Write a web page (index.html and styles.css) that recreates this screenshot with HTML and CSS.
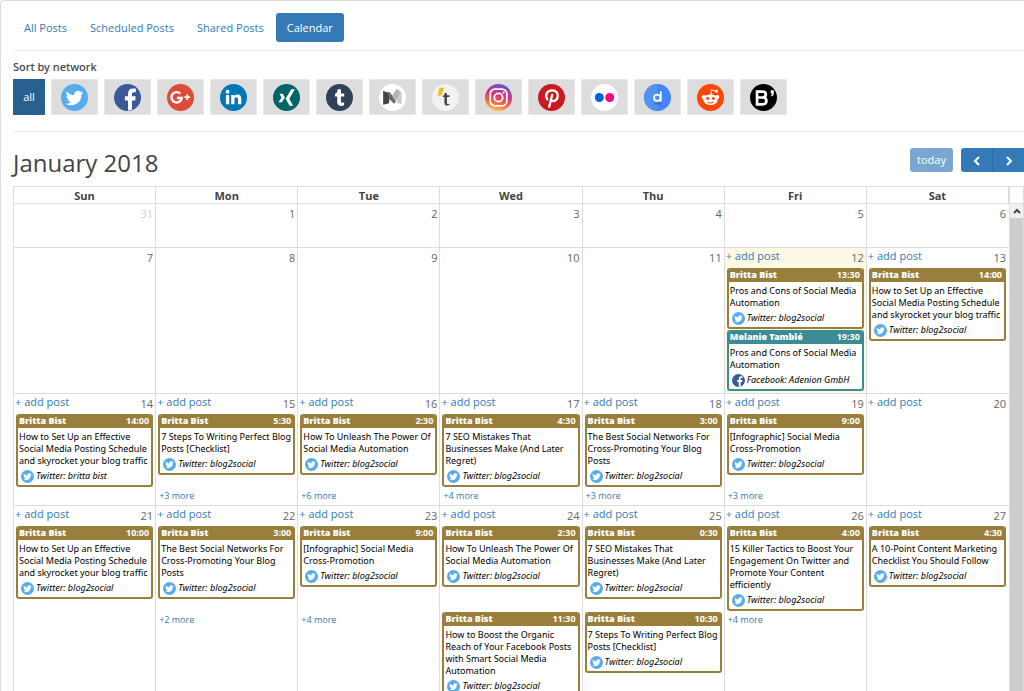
FILE: index.html
```
<!DOCTYPE html>
<html lang="en">
<head>
<meta charset="utf-8">
<title>Calendar</title>
<link rel="stylesheet" href="styles.css">
</head>
<body>
<svg class="sprite" aria-hidden="true">
  <symbol id="bird" viewBox="0 0 26 26"><circle cx="13" cy="13" r="13" fill="#55acee"/><path fill="#fff" d="M21.500 8.200c-.6.3-1.300.5-2 .6.700-.4 1.300-1.100 1.500-1.900-.7.4-1.400.7-2.200.8a3.500 3.500 0 0 0-6 3.200C10 10.700 7.400 9.300 5.700 7.200c-1 1.600-.5 3.600 1 4.700-.5 0-1.100-.2-1.500-.4 0 1.700 1.200 3.100 2.800 3.400-.5.1-1 .2-1.600.1.4 1.400 1.700 2.400 3.200 2.400A7 7 0 0 1 4.500 18.900a9.900 9.900 0 0 0 15.200-8.800c.7-.5 1.300-1.200 1.800-1.900z"/></symbol>
  <symbol id="fb" viewBox="0 0 26 26"><circle cx="13" cy="13" r="13" fill="#3b5998"/><path fill="#fff" d="M13.500 25.500v-9.700h-3v-4h3V9.300c0-3.200 1.900-4.900 4.700-4.900 1.300 0 2.500.1 2.800.1v3.400h-1.900c-1.500 0-1.800.7-1.800 1.800v2.100h3.600l-.5 4h-3.100v9.100c-1.200.5-2.500.6-3.800.6z"/></symbol>
</svg>
<div class="panel">
  <nav class="tabs">
    <a href="#">All Posts</a>
    <a href="#">Scheduled Posts</a>
    <a href="#">Shared Posts</a>
    <a href="#" class="active">Calendar</a>
  </nav>
  <section class="filter">
    <h2>Sort by network</h2>
    <div class="networks">
      <button class="all">all</button>
      <button aria-label="Twitter"><svg class="logo"><use href="#bird"/></svg></button>
      <button aria-label="Facebook"><svg class="logo"><use href="#fb"/></svg></button>
      <button aria-label="Google+"><svg class="logo" viewBox="0 0 26 26"><circle cx="13" cy="13" r="13" fill="#dd4b39"/><path d="M12.800 9.300a5 5 0 1 0 1.400 4.200H9.500" fill="none" stroke="#fff" stroke-width="2.300"/><path d="M19.500 10v5.400M16.800 12.700h5.400" stroke="#fff" stroke-width="1.700"/></svg></button>
      <button aria-label="LinkedIn"><svg class="logo" viewBox="0 0 26 26"><circle cx="13" cy="13" r="13" fill="#0077b5"/><circle cx="7.300" cy="7.500" r="1.900" fill="#fff"/><path fill="#fff" d="M5.700 10.500h3.200v9H5.700zM10.800 10.500h3v1.300c.6-1 1.700-1.600 3-1.600 2.900 0 3.700 1.900 3.700 4.500v4.800h-3.200v-4.300c0-1.400-.2-2.400-1.600-2.400s-1.800 1-1.800 2.400v4.300h-3.100z"/></svg></button>
      <button aria-label="Xing"><svg class="logo" viewBox="0 0 26 26"><circle cx="13" cy="13" r="13" fill="#026466"/><path d="M6.200 9.300h3.200l2.100 3.700-3 4.500H5.300l3-4.500zM17.600 5h3.500l-5.400 9.300 3.700 6.700h-3.500l-3.700-6.700z" fill="#fff"/></svg></button>
      <button aria-label="Tumblr"><svg class="logo" viewBox="0 0 26 26"><circle cx="13" cy="13" r="13" fill="#32415a"/><path fill="#fff" d="M11.200 5h3.200v4.200h3.100v2.900h-3.100v4.400c0 1.800 1.400 1.900 3 1.100v2.800c-3 1.400-6.600.8-6.600-3v-5.300H8.700V9.500c1.600-.5 2.400-1.900 2.500-4.500z"/></svg></button>
      <button aria-label="Medium"><svg class="logo" viewBox="0 0 26 26"><circle cx="13" cy="13" r="13" fill="#fff"/><path d="M4 6.500l5.800 2.500v9.500L4 20z" fill="#444"/><path d="M8 7.500l2.500.5 6 8.500-2 2.500-4.700-4.500z" fill="#6a6a6a"/><path d="M12.700 11l4.300-6.500L21.500 8l-5.700 8.500z" fill="#b4b4b4"/><path d="M21.700 8v11.500l-4.200-1.700v-4z" fill="#c8c8c8"/></svg></button>
      <button aria-label="Torial"><svg class="logo" viewBox="0 0 26 26"><circle cx="13" cy="13" r="13" fill="#f2f2f2"/><path d="M7.200 3.500h4.500L8.800 11H5.500z" fill="#fbb615"/><path fill="#444" d="M12.300 8.600h2.100v2.300h2.500v1.500h-2.500v5.700c0 1.500 1 1.700 2.500 1v1c-2.400 1.300-4.900.7-4.900-1.800v-5.900h-1.600v-1.100c1.200-.4 1.700-1.200 1.900-2.700z"/></svg></button>
      <button aria-label="Instagram"><svg class="logo" viewBox="0 0 26 26"><defs><linearGradient id="ig" x1=".3" y1="1" x2=".6" y2="0"><stop offset="0" stop-color="#ffc65a"/><stop offset=".3" stop-color="#fb6a3c"/><stop offset=".6" stop-color="#d6308a"/><stop offset="1" stop-color="#6b50cc"/></linearGradient></defs><circle cx="13" cy="13" r="13" fill="url(#ig)"/><g fill="none" stroke="#fff" stroke-width="1.700"><rect x="5" y="5" width="16" height="16" rx="4.500"/><circle cx="13" cy="13" r="4"/></g><circle cx="17.800" cy="8.300" r="1.100" fill="#fff"/></svg></button>
      <button aria-label="Pinterest"><svg class="logo" viewBox="0 0 26 26"><circle cx="13" cy="13" r="13" fill="#cb1a1f"/><path d="M9 14.800c-2.800-3.700-.5-8.600 4.600-8.600 4.300 0 6 3 5.300 6.300-.8 3.900-5.400 5.300-6.500 2.400M13.600 10.500L10.800 22" fill="none" stroke="#fff" stroke-width="2.200" stroke-linecap="round"/></svg></button>
      <button aria-label="Flickr"><svg class="logo" viewBox="0 0 26 26"><circle cx="13" cy="13" r="13" fill="#fff"/><circle cx="8" cy="13" r="4.300" fill="#0063dc"/><circle cx="18" cy="13" r="4.300" fill="#ff0084"/></svg></button>
      <button aria-label="Diigo"><svg class="logo" viewBox="0 0 26 26"><circle cx="13" cy="13" r="13" fill="#4285f4"/><path d="M13 0a13 13 0 0 0 0 26z" fill="#5192f0"/><circle cx="12.700" cy="13.300" r="3" fill="none" stroke="#fff" stroke-width="1.600"/><path d="M16.200 7v10" stroke="#fff" stroke-width="1.600"/><path d="M9.500 19h7.500" stroke="#557" stroke-width="1"/></svg></button>
      <button aria-label="Reddit"><svg class="logo" viewBox="0 0 26 26"><circle cx="13" cy="13" r="13" fill="#ff4500"/><path d="M13.500 11l.3-5.200 4 1" fill="none" stroke="#fff" stroke-width="1"/><circle cx="18.700" cy="6.900" r="1.500" fill="#fff"/><circle cx="6.500" cy="12.500" r="2" fill="#fff"/><circle cx="19.500" cy="12.500" r="2" fill="#fff"/><ellipse cx="13" cy="15" rx="7" ry="5.200" fill="#fff"/><circle cx="10.200" cy="14" r="1.400" fill="#ff4500"/><circle cx="15.800" cy="14" r="1.400" fill="#ff4500"/><path d="M10 17.200c1.800 1.300 4.200 1.300 6 0" fill="none" stroke="#ff4500" stroke-width="1"/></svg></button>
      <button aria-label="Bloglovin"><svg class="logo" viewBox="0 0 26 26"><circle cx="13" cy="13" r="13" fill="#000"/><path d="M6.800 7.400h5.400c4 0 4 5.200.3 5.600 4.500.3 4.400 6.600-.2 6.600H6.800zM6.800 13h6" fill="none" stroke="#fff" stroke-width="2.600"/><path d="M20 6h2.900v2.800c0 1.500-.8 2.600-2.200 3l-.5-1c.7-.4 1-1 1-1.700H20z" fill="#fff"/></svg></button>
    </div>
  </section>
  <header class="toolbar">
    <h1>January 2018</h1>
    <button class="today">today</button>
    <div class="pager">
      <button aria-label="Previous month"><svg viewBox="0 0 8 10"><path d="M6 1L2 5l4 4"/></svg></button>
      <button aria-label="Next month"><svg viewBox="0 0 8 10"><path d="M2 1l4 4-4 4"/></svg></button>
    </div>
  </header>
  <div class="calendar">
    <table class="month">
      <thead>
        <tr><th>Sun</th><th>Mon</th><th>Tue</th><th>Wed</th><th>Thu</th><th>Fri</th><th>Sat</th></tr>
      </thead>
      <tbody>
        <tr>
          <td><div class="date other"><span>31</span></div></td>
          <td><div class="date"><span>1</span></div></td>
          <td><div class="date"><span>2</span></div></td>
          <td><div class="date"><span>3</span></div></td>
          <td><div class="date"><span>4</span></div></td>
          <td><div class="date"><span>5</span></div></td>
          <td><div class="date"><span>6</span></div></td>
        </tr>
        <tr>
          <td><div class="date"><span>7</span></div></td>
          <td><div class="date"><span>8</span></div></td>
          <td><div class="date"><span>9</span></div></td>
          <td><div class="date"><span>10</span></div></td>
          <td><div class="date"><span>11</span></div></td>
          <td class="now"><div class="date"><a href="#">+ add post</a><span>12</span></div>
            <article class="post"><header><b>Britta Bist</b><time>13:30</time></header><p>Pros and Cons of Social Media Automation</p><footer><svg><use href="#bird"/></svg>Twitter: blog2social</footer></article>
            <article class="post teal"><header><b>Melanie Tamblé</b><time>19:30</time></header><p>Pros and Cons of Social Media Automation</p><footer><svg><use href="#fb"/></svg>Facebook: Adenion GmbH</footer></article>
          </td>
          <td><div class="date"><a href="#">+ add post</a><span>13</span></div>
            <article class="post"><header><b>Britta Bist</b><time>14:00</time></header><p>How to Set Up an Effective Social Media Posting Schedule and skyrocket your blog traffic</p><footer><svg><use href="#bird"/></svg>Twitter: blog2social</footer></article>
          </td>
        </tr>
        <tr>
          <td><div class="date"><a href="#">+ add post</a><span>14</span></div>
            <article class="post"><header><b>Britta Bist</b><time>14:00</time></header><p>How to Set Up an Effective Social Media Posting Schedule and skyrocket your blog traffic</p><footer><svg><use href="#bird"/></svg>Twitter: britta bist</footer></article>
          </td>
          <td><div class="date"><a href="#">+ add post</a><span>15</span></div>
            <article class="post"><header><b>Britta Bist</b><time>5:30</time></header><p>7 Steps To Writing Perfect Blog Posts [Checklist]</p><footer><svg><use href="#bird"/></svg>Twitter: blog2social</footer></article>
            <a href="#" class="more">+3 more</a>
          </td>
          <td><div class="date"><a href="#">+ add post</a><span>16</span></div>
            <article class="post"><header><b>Britta Bist</b><time>2:30</time></header><p>How To Unleash The Power Of Social Media Automation</p><footer><svg><use href="#bird"/></svg>Twitter: blog2social</footer></article>
            <a href="#" class="more">+6 more</a>
          </td>
          <td><div class="date"><a href="#">+ add post</a><span>17</span></div>
            <article class="post"><header><b>Britta Bist</b><time>4:30</time></header><p>7 SEO Mistakes That Businesses Make (And Later Regret)</p><footer><svg><use href="#bird"/></svg>Twitter: blog2social</footer></article>
            <a href="#" class="more">+4 more</a>
          </td>
          <td><div class="date"><a href="#">+ add post</a><span>18</span></div>
            <article class="post"><header><b>Britta Bist</b><time>3:00</time></header><p>The Best Social Networks For Cross-Promoting Your Blog Posts</p><footer><svg><use href="#bird"/></svg>Twitter: blog2social</footer></article>
            <a href="#" class="more">+3 more</a>
          </td>
          <td><div class="date"><a href="#">+ add post</a><span>19</span></div>
            <article class="post"><header><b>Britta Bist</b><time>9:00</time></header><p>[Infographic] Social Media Cross-Promotion</p><footer><svg><use href="#bird"/></svg>Twitter: blog2social</footer></article>
            <a href="#" class="more">+3 more</a>
          </td>
          <td><div class="date"><a href="#">+ add post</a><span>20</span></div></td>
        </tr>
        <tr>
          <td><div class="date"><a href="#">+ add post</a><span>21</span></div>
            <article class="post"><header><b>Britta Bist</b><time>10:00</time></header><p>How to Set Up an Effective Social Media Posting Schedule and skyrocket your blog traffic</p><footer><svg><use href="#bird"/></svg>Twitter: blog2social</footer></article>
          </td>
          <td><div class="date"><a href="#">+ add post</a><span>22</span></div>
            <article class="post"><header><b>Britta Bist</b><time>3:00</time></header><p>The Best Social Networks For Cross-Promoting Your Blog Posts</p><footer><svg><use href="#bird"/></svg>Twitter: blog2social</footer></article>
            <a href="#" class="more">+2 more</a>
          </td>
          <td><div class="date"><a href="#">+ add post</a><span>23</span></div>
            <article class="post"><header><b>Britta Bist</b><time>9:00</time></header><p>[Infographic] Social Media Cross-Promotion</p><footer><svg><use href="#bird"/></svg>Twitter: blog2social</footer></article>
            <a href="#" class="more">+4 more</a>
          </td>
          <td><div class="date"><a href="#">+ add post</a><span>24</span></div>
            <article class="post"><header><b>Britta Bist</b><time>2:30</time></header><p>How To Unleash The Power Of Social Media Automation</p><footer><svg><use href="#bird"/></svg>Twitter: blog2social</footer></article>
            <article class="post"><header><b>Britta Bist</b><time>11:30</time></header><p>How to Boost the Organic Reach of Your Facebook Posts with Smart Social Media Automation</p><footer><svg><use href="#bird"/></svg>Twitter: blog2social</footer></article>
          </td>
          <td><div class="date"><a href="#">+ add post</a><span>25</span></div>
            <article class="post"><header><b>Britta Bist</b><time>0:30</time></header><p>7 SEO Mistakes That Businesses Make (And Later Regret)</p><footer><svg><use href="#bird"/></svg>Twitter: blog2social</footer></article>
            <article class="post"><header><b>Britta Bist</b><time>10:30</time></header><p>7 Steps To Writing Perfect Blog Posts [Checklist]</p><footer><svg><use href="#bird"/></svg>Twitter: blog2social</footer></article>
          </td>
          <td><div class="date"><a href="#">+ add post</a><span>26</span></div>
            <article class="post"><header><b>Britta Bist</b><time>4:00</time></header><p>15 Killer Tactics to Boost Your Engagement On Twitter and Promote Your Content efficiently</p><footer><svg><use href="#bird"/></svg>Twitter: blog2social</footer></article>
            <a href="#" class="more">+4 more</a>
          </td>
          <td><div class="date"><a href="#">+ add post</a><span>27</span></div>
            <article class="post"><header><b>Britta Bist</b><time>4:30</time></header><p>A 10-Point Content Marketing Checklist You Should Follow</p><footer><svg><use href="#bird"/></svg>Twitter: blog2social</footer></article>
          </td>
        </tr>
      </tbody>
    </table>
    <div class="scrollbar">
      <button aria-label="Scroll up"><svg viewBox="0 0 8 6"><path d="M1 5l3-3 3 3"/></svg></button>
      <div class="thumb"></div>
    </div>
  </div>
</div>
</body>
</html>
```
FILE: styles.css
```
* { box-sizing: border-box; }
body {
  margin: 0;
  height: 100vh;
  overflow: hidden;
  background: #fff;
  color: #444;
  font: 11px/16px "Open Sans", "Noto Sans", sans-serif;
}
a { color: #337ab7; text-decoration: none; }
button { border: 0; padding: 0; font: inherit; cursor: pointer; }
h1, h2, p { margin: 0; font-weight: 400; }
.sprite { display: none; }

.panel {
  display: flex;
  flex-direction: column;
  height: 100%;
  padding-left: 12px;
  border: solid #ddd;
  border-width: 1px 0 0 1px;
  border-top-left-radius: 4px;
}

.tabs {
  display: flex;
  gap: 1px;
  padding: 12px 0 8px;
  border-bottom: 1px solid #eee;
}
.tabs a { padding: 7px 11px 6px; border-radius: 3px; line-height: 16px; }
.tabs .active { background: #337ab7; color: #fff; }

.filter { padding: 8px 0 16px; border-bottom: 1px solid #eee; }
.filter h2 { font: 500 11px/16px "Noto Sans", "Open Sans", sans-serif; }
.networks { display: flex; gap: 6px; padding-top: 4px; }
.networks button {
  display: grid;
  place-items: center;
  width: 47px;
  height: 36px;
  background: #ddd;
  border: 1px solid #e8e8e8;
}
.networks .all { width: 32px; background: #286090; border-color: #286090; color: #fff; }
.logo { width: 27px; height: 27px; }

.toolbar { display: flex; align-items: flex-start; padding: 16px 0 13px; }
.toolbar h1 { flex: 1; font-size: 24px; line-height: 24px; padding-top: 3px; margin-bottom: -2px; }
.today { width: 43px; height: 24px; margin-right: 8px; border-radius: 3px; background: #7aa7d1; color: #fff; }
.pager { display: flex; border-radius: 3px 0 0 3px; overflow: hidden; }
.pager button { width: 31px; height: 24px; background: #337ab7; }
.pager button:first-child { width: 32px; border-right: 1px solid #2e6da4; }
.pager svg { width: 8px; height: 10px; vertical-align: middle; fill: none; stroke: #fff; stroke-width: 2; }

.calendar {
  display: grid;
  grid-template-columns: 1fr 14px;
  flex: 1;
  min-height: 0;
  overflow: hidden;
  border: solid #ddd;
  border-width: 1px 1px 0 1px;
}
.month, .month thead, .month tbody { display: block; }
.month tr {
  display: grid;
  grid-template-columns: repeat(7, minmax(0, 1fr));
}
.month th {
  height: 16px;
  padding: 0;
  border-right: 1px solid #ddd;
  line-height: 18px;
}
.month tbody tr {
  grid-template-rows: 20px auto auto;
  min-height: 44px;
  border-top: 1px solid #ddd;
}
.month td {
  display: grid;
  grid-row: 1 / span 3;
  grid-template-rows: subgrid;
  grid-template-columns: minmax(0, 1fr);
  align-items: start;
  padding: 0 1px 1px;
  border-right: 1px solid #ddd;
}
.month td:last-child { border-right-color: transparent; }
.month .now { background: #fcf8e3; }
.date { display: flex; padding-right: 1px; color: #666; }
.date a { font-size: 11px; line-height: 16px; }
.date span { margin-left: auto; line-height: 20px; }
.date.other { color: #ccc; }

.post {
  margin: 0 1px 1px;
  border: 2px solid #9a7f3c;
  border-top: 0;
  border-radius: 3px;
  background: #fff;
  color: #000;
  overflow: hidden;
  font-family: "Noto Sans", "Open Sans", sans-serif;
  font-size: 9px;
  line-height: 12px;
}
.post:nth-child(2):last-child { grid-row: 2 / span 2; }
.post header {
  display: flex;
  justify-content: space-between;
  padding: 0 2px 0 1px;
  background: #9a7f3c;
  color: #fff;
  font-weight: 700;
  line-height: 14px;
}
.post p { padding: 3px 0 0 1px; }
.post footer { display: flex; align-items: center; gap: 2px; height: 18px; padding-left: 3px; font-style: italic; }
.post footer svg { flex: none; width: 13px; height: 13px; }
.teal { border-color: #3a8c95; }
.teal header { background: #3a8c95; }
.more { padding-left: 2px; font-size: 9px; line-height: 16px; }

.scrollbar { display: flex; flex-direction: column; padding-top: 16px; border-left: 1px solid #ddd; }
.scrollbar button { height: 15px; background: #f0f0f0; border-top: 1px solid #ddd; }
.scrollbar svg { display: block; width: 8px; height: 6px; margin: auto; fill: none; stroke: #444; stroke-width: 2; }
.thumb { flex: 1; background: #cdcdcd; }
```
